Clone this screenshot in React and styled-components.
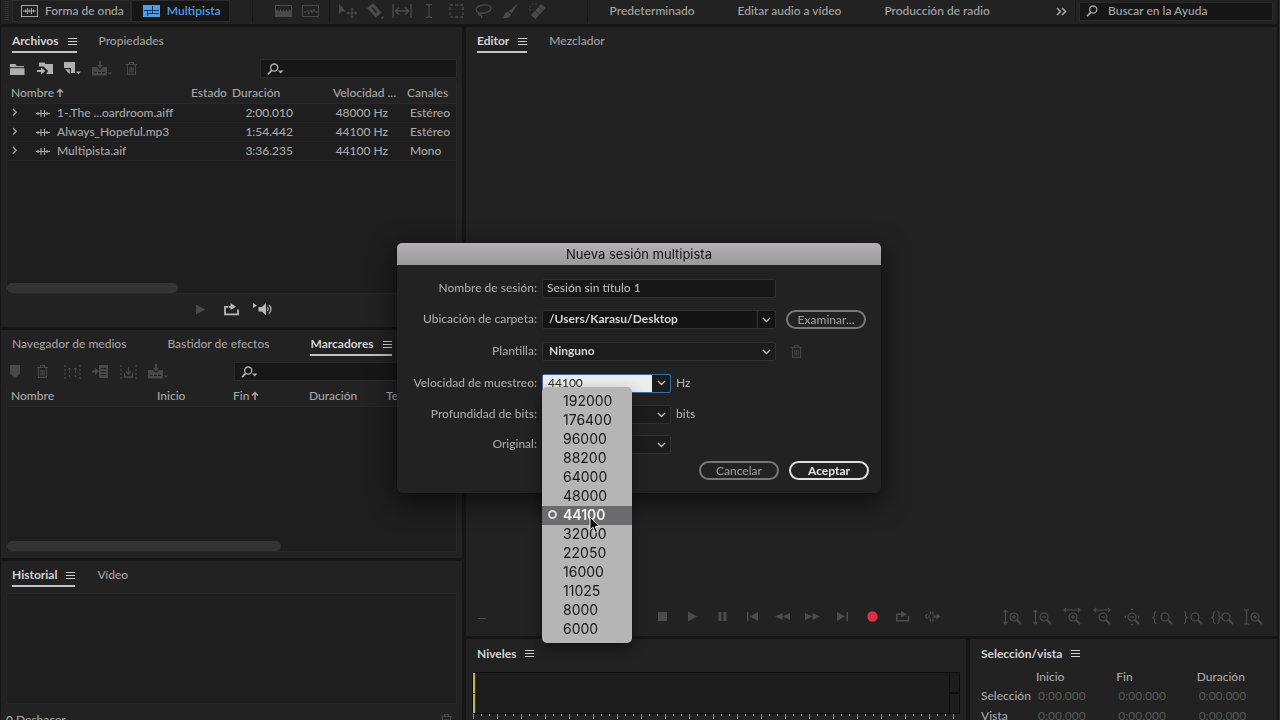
import styled, { createGlobalStyle, css } from "styled-components";

const GlobalStyle = createGlobalStyle`
  * {
    box-sizing: border-box;
  }

  body {
    margin: 0;
    background: #161616;
    color: #a6a6a6;
    font-family: "Lato", "Open Sans", sans-serif;
    font-size: 12px;
    font-weight: 500;
    line-height: 20px;
    overflow: hidden;
  }

  button, input, select {
    font: inherit;
    color: inherit;
    margin: 0;
    padding: 0;
    border: 0;
    background: none;
    outline: none;
  }

  svg {
    display: block;
    flex-shrink: 0;
  }
`;

const Shell = styled.div`
  height: 100vh;
  display: flex;
  flex-direction: column;
  gap: 3px;
  padding: 0 2px 0 1px;
  border-right: 1px solid #4a2a24;
`;

/* ---------- top bar ---------- */

const TopBar = styled.header`
  flex: 0 0 24px;
  display: flex;
  align-items: center;
  background: #222;
  padding: 0 4px 2px;
`;

const Grip = styled.div`
  width: 4px;
  height: 20px;
  margin-right: 3px;
  background: repeating-linear-gradient(#333 0 1px, #222 1px 2px);
`;

const ViewButton = styled.button`
  height: 22px;
  display: flex;
  align-items: center;
  gap: 7px;
  padding: 0 ${(p) => (p.$on ? "8px 0 11px" : "6px 0 8px")};
  border: 1px solid #2b2b2b;
  color: ${(p) => (p.$on ? "#4b9fea" : "#a6a6a6")};
  background: ${(p) => (p.$on ? "#161616" : "#202020")};
  font-weight: ${(p) => (p.$on ? 600 : 500)};
`;

const Tools = styled.div`
  display: flex;
  align-items: center;
  color: #4a4a4a;
  height: 22px;
  padding: ${(p) => p.$pad};
  margin-left: ${(p) => p.$left || 0}px;
  border-left: 1px solid #191919;
`;

const ToolButton = styled.button`
  width: 27px;
  height: 20px;
  display: flex;
  align-items: center;
  justify-content: center;
`;

const Workspaces = styled.nav`
  flex: 1;
  display: flex;
  align-items: center;
  gap: 43px;
  height: 22px;
  padding: 0 8px 0 22px;
  border-left: 1px solid #191919;
  border-right: 1px solid #191919;
  white-space: nowrap;

  button:last-child {
    margin-left: auto;
  }
`;

const HelpSearch = styled.label`
  flex: 0 0 194px;
  height: 19px;
  display: flex;
  align-items: center;
  gap: 10px;
  padding: 0 6px;
  margin-left: 3px;
  border: 1px solid #292929;
  background: #161616;

  input {
    min-width: 0;
    flex: 1;
  }

  input::placeholder {
    color: #a6a6a6;
    opacity: 1;
  }
`;

/* ---------- panels ---------- */

const Workspace = styled.main`
  flex: 1;
  min-height: 0;
  display: grid;
  grid-template-columns: minmax(0, 461fr) minmax(0, 811fr);
  gap: 4px;
`;

const Column = styled.div`
  display: grid;
  grid-template-rows: ${(p) => p.$rows};
  gap: 3px;
  min-height: 0;
`;

const BottomRow = styled.div`
  display: grid;
  grid-template-columns: minmax(0, 500fr) minmax(0, 307fr);
  gap: 4px;
  min-height: 0;
`;

const Panel = styled.section`
  display: flex;
  flex-direction: column;
  min-width: 0;
  min-height: 0;
  overflow: hidden;
  background: #222;
`;

const TabBar = styled.div`
  flex: 0 0 26px;
  display: flex;
  gap: 22px;
  padding-left: 11px;
`;

const Tab = styled.button`
  display: flex;
  align-items: center;
  gap: 9px;
  padding: ${(p) => (p.$plain ? 5 : 4)}px ${(p) => (p.$on ? 0 : 19)}px 0 0;
  border-bottom: 2px solid ${(p) => (p.$on && !p.$plain ? "#c4c4c4" : "transparent")};
  color: ${(p) => (p.$on ? "#d2d2d2" : "#a0a0a0")};
  font-weight: ${(p) => (p.$on ? 700 : 500)};
  line-height: 18px;
  white-space: nowrap;
`;

const PanelTools = styled.div`
  flex: 0 0 30px;
  display: flex;
  align-items: center;
  padding: 6px 5px 5px 9px;
  color: #4a4a4a;
`;

const PanelTool = styled.button`
  width: ${(p) => p.$w || 28}px;
  height: 18px;
  display: flex;
  align-items: center;
  color: ${(p) => (p.$on ? "#b0b0b0" : "#484848")};
`;

const PanelSearch = styled.label`
  flex: 0 0 ${(p) => p.$size};
  height: 19px;
  display: flex;
  align-items: center;
  gap: 6px;
  margin-left: auto;
  padding: 0 6px;
  background: #171717;
  border: 1px solid #2a2a2a;
  color: #b0b0b0;

  input {
    flex: 1;
    min-width: 0;
  }
`;

const ListFrame = styled.div`
  flex: ${(p) => p.$flex || "1 1 0"};
  min-height: 0;
  display: flex;
  flex-direction: column;
  margin: ${(p) => p.$margin || "0 5px"};
  background: #1e1e1e;
  border: 1px solid #282828;
  border-top: ${(p) => (p.$boxed ? "1px solid #282828" : 0)};
`;

const DataTable = styled.table`
  width: 100%;
  table-layout: fixed;
  border-collapse: collapse;
  white-space: nowrap;

  th, td {
    padding: 0 0 0 4px;
    overflow: hidden;
    text-align: left;
    vertical-align: top;
    font-weight: 500;
  }

  th {
    height: 20px;
    line-height: 20px;
    background: #222;
    border-bottom: 1px solid #282828;
  }

  td {
    height: 19px;
    line-height: 17px;
    border-bottom: 1px solid #262626;
  }
`;

const Col = styled.col`
  width: ${(p) => (p.$w ? `${p.$w}px` : "auto")};
`;

const NumberCell = styled.td`
  && {
    text-align: right;
    padding-right: ${(p) => p.$right}px;
  }
`;

const ChannelCell = styled.td`
  && {
    padding-left: 7px;
  }
`;

const FileName = styled.span`
  display: flex;
  align-items: center;
  padding-left: 1px;

  svg:first-child {
    margin-right: 18px;
  }

  svg + svg {
    margin-right: 7px;
  }
`;

const HeadLabel = styled.span`
  display: flex;
  align-items: center;
  gap: 2px;
`;

const ScrollBar = styled.div`
  height: 10px;
  width: ${(p) => p.$size};
  margin-top: auto;
  border-radius: 5px;
  background: #333;
`;

const Preview = styled.div`
  flex: 0 0 33px;
  display: flex;
  align-items: center;
  justify-content: center;
  gap: 14px;
  padding: 0 0 3px 6px;

  button {
    height: 18px;
    display: flex;
    align-items: center;
    color: #b8b8b8;
  }

  button:first-child {
    margin-right: 4px;
    color: #4a4a4a;
  }
`;

const HistoryFooter = styled.footer`
  flex: 0 0 26px;
  display: flex;
  justify-content: space-between;
  padding: 6px 10px 0 5px;

  button {
    color: #484848;
  }
`;

/* ---------- editor ---------- */

const EditorArea = styled.div`
  flex: 1;
`;

const TransportBar = styled.div`
  flex: 0 0 39px;
  display: flex;
  align-items: center;
  gap: 50px;
  padding: 0 10px 0 12px;
  color: #4c4c4c;
`;

const TimeReadout = styled.div`
  flex: 1;
  padding-top: 4px;
`;

const ButtonGroup = styled.div`
  display: flex;
`;

const TransportButton = styled.button`
  width: 30px;
  height: 24px;
  display: flex;
  align-items: center;
  justify-content: center;
  color: ${(p) => (p.$rec ? "#dc2f46" : "#4c4c4c")};
`;

/* ---------- levels ---------- */

const Meter = styled.div`
  flex: 0 0 42px;
  display: flex;
  margin: 7px 6px 0;
  border: 1px solid #0d0d0d;
  background: #1c1c1c;
`;

const MeterLevel = styled.div`
  width: 3px;
  background: linear-gradient(#b7b94a 0 49%, #55561f 49% 52%, #b7b94a 52%);
  border-right: 1px solid #33331a;
`;

const MeterClip = styled.div`
  width: 10px;
  margin-left: auto;
  border-left: 1px solid #0d0d0d;
  background: linear-gradient(#1c1c1c 0 48%, #0d0d0d 48% 52%, #1c1c1c 52%);
`;

const Ticks = styled.svg`
  width: calc(100% - 16px);
  height: 6px;
  margin-left: 7px;
`;

const TimesTable = styled.table`
  width: 100%;
  margin-top: 2px;
  table-layout: fixed;
  border-collapse: collapse;
  color: #555;

  th, td {
    height: 18px;
    line-height: 18px;
    padding: 0 0 0 2px;
    text-align: left;
    font-weight: 500;
    white-space: nowrap;
  }

  th {
    color: #a6a6a6;
    padding: 0;
  }

  th[scope="row"] {
    padding-left: 11px;
  }

  tr:last-child > * {
    padding-top: 2px;
  }

  thead tr > * {
    padding: 0 0 2px;
    line-height: 16px;
  }
`;

/* ---------- dialog ---------- */

const Overlay = styled.div`
  position: fixed;
  inset: 0;
  display: flex;
  align-items: center;
  justify-content: center;
  padding: 16px 2px 0 0;
`;

const Dialog = styled.form`
  width: 484px;
  border-radius: 5px;
  background: #222;
  box-shadow: 0 8px 24px 4px rgba(0, 0, 0, 0.5), 0 0 1px #000;
`;

const DialogTitle = styled.h1`
  margin: 0;
  height: 22px;
  border-radius: 5px 5px 0 0;
  background: linear-gradient(#b4b1b4, #9b989b);
  color: #111;
  font: 400 13px/22px "Inter", sans-serif;
  text-align: center;
`;

const Fields = styled.div`
  display: grid;
  grid-template-columns: 140px 1fr;
  grid-template-rows: 30px 32px 32px 32px 30px 30px;
  column-gap: 5px;
  align-items: center;
  margin-top: 8px;
`;

const FieldLabel = styled.label`
  text-align: right;
  white-space: nowrap;
`;

const FieldLine = styled.div`
  position: relative;
  display: flex;
  align-items: center;
`;

const fieldBox = css`
  height: 19px;
  width: ${(p) => (p.$wide ? 234 : 129)}px;
  border: 1px solid #303030;
  border-radius: 2px;
  background: #171717;
`;

const TextField = styled.input`
  ${fieldBox}
  padding: 0 4px;
  color: #b8b8b8;
`;

const SelectBox = styled.div`
  ${fieldBox}
  position: relative;
  display: flex;
  background: ${(p) => (p.$dark ? "#141414" : "#1c1c1c")};

  select {
    flex: 1;
    appearance: none;
    height: 16px;
    line-height: 16px;
    padding-left: 6px;
    color: #d4d4d4;
    font-weight: 700;
  }

  svg {
    position: absolute;
    right: 4px;
    top: 6px;
    color: #bdbdbd;
    pointer-events: none;
  }
`;

const Divider = styled.span`
  width: 1px;
  margin-right: 17px;
  background: #303030;
`;

const ComboBox = styled.div`
  ${fieldBox}
  display: flex;
  border-color: #3c6ca8;
  background: #1c1c1c;

  input {
    flex: 1;
    min-width: 0;
    padding-left: 5px;
    background: #ececec;
    color: #333;
  }

  button {
    width: 18px;
    display: flex;
    align-items: center;
    justify-content: center;
    color: #bdbdbd;
  }
`;

const Unit = styled.span`
  margin-left: 5px;
`;

const PillButton = styled.button`
  height: 19px;
  width: 80px;
  line-height: 15px;
  border: 2px solid ${(p) => (p.$primary ? "#e0e0e0" : "#777")};
  border-radius: 10px;
  color: ${(p) => (p.$primary ? "#e6e6e6" : "#999")};
  font-weight: ${(p) => (p.$primary ? 700 : 500)};
`;

const BrowseButton = styled(PillButton)`
  margin-left: 10px;
`;

const TrashButton = styled.button`
  margin-left: 15px;
  color: #444;
`;

const DialogActions = styled.div`
  display: flex;
  justify-content: flex-end;
  gap: 10px;
  padding: 2px 12px 13px;
`;

const RateMenu = styled.ul`
  position: absolute;
  z-index: 2;
  top: 14px;
  left: 0;
  width: 90px;
  margin: 0;
  padding: 5px 0 4px;
  list-style: none;
  border-radius: 5px;
  background: #b5b5b5;
  box-shadow: 0 6px 14px rgba(0, 0, 0, 0.45);
`;

const RateOption = styled.li`
  display: flex;
  align-items: center;
  gap: 6px;
  height: 19px;
  padding: 0 0 2px ${(p) => (p["aria-selected"] ? 6 : 21)}px;
  background: ${(p) => (p["aria-selected"] ? "#6b6a6c" : "none")};
  color: ${(p) => (p["aria-selected"] ? "#f4f4f4" : "#161616")};
  font: ${(p) => (p["aria-selected"] ? 600 : 400)} 14px/17px "Inter", sans-serif;
`;

const RateDot = styled.span`
  width: 9px;
  height: 9px;
  border: 2px solid #d8d8d8;
  border-radius: 50%;
`;

const Pointer = styled.svg`
  position: absolute;
  z-index: 3;
  left: 47px;
  top: 143px;
`;

/* ---------- icons ---------- */

function Icon({ w = 16, h = 16, children, fill = "none", stroke = "currentColor", sw = 1 }) {
  return (
    <svg width={w} height={h} viewBox={`0 0 ${w} ${h}`} fill={fill} stroke={stroke} strokeWidth={sw} overflow="visible" aria-hidden="true">
      {children}
    </svg>
  );
}

const solid = { fill: "currentColor", stroke: "none" };

const MenuIcon = () => (
  <Icon w={9} h={9}>
    <path d="M0 1.5h9M0 4.5h9M0 7.5h9" />
  </Icon>
);

const SearchIcon = () => (
  <Icon w={12} h={12} sw={1.3}>
    <circle cx="7.2" cy="4.6" r="3.6" />
    <path d="M4.8 7.4L1 11.2" strokeWidth="1.7" />
  </Icon>
);

const SearchMenuIcon = () => (
  <Icon w={17} h={12} sw={1.3}>
    <circle cx="7.2" cy="4.6" r="3.6" />
    <path d="M4.8 7.4L1 11.2" strokeWidth="1.7" />
    <path d="M11 7.5h5.4l-2.7 3z" {...solid} />
  </Icon>
);

const ChevronDown = () => (
  <Icon w={9} h={6} sw={1.4}>
    <path d="M1 1l3.5 3.5L8 1" />
  </Icon>
);

const ChevronRight = () => (
  <Icon w={6} h={10} sw={1.3}>
    <path d="M1 1l3.2 3.2L1 7.6" />
  </Icon>
);

const SortUp = () => (
  <Icon w={8} h={10} sw={1.5}>
    <path d="M4 9V1.5M1 4.5l3-3 3 3" />
  </Icon>
);

const WaveIcon = () => (
  <Icon w={14} h={10} sw={1.2}>
    <path d="M0 5.500h14M2 4v3M5 2v7M8.500 2v7M11 4v3" />
  </Icon>
);

const WaveViewIcon = () => (
  <Icon w={17} h={12}>
    <rect x="0.5" y="0.5" width="16" height="11" />
    <path d="M2 6h13M4.5 4.5v3M6.5 3v6M8.5 4.5v3M10.5 3v6M12.5 4.5v3" />
  </Icon>
);

const MultiViewIcon = () => (
  <Icon w={17} h={12}>
    <rect x="0" y="0" width="17" height="12" {...solid} />
    <path d="M1 5.500h15M9.500 1v7M5 8.500h11M4.500 6v5" stroke="#183450" />
  </Icon>
);

const SpectrumIcon = () => (
  <Icon w={17} h={12}>
    <rect x="0.5" y="0.5" width="16" height="11" />
    <path d="M1 11V6l1.5-2 1.5 3 1.500-3 1.500 3 1.500-3 1.500 3 1.500-3 1.500 3 1.500-3L16 6v5z" {...solid} />
  </Icon>
);

const PitchIcon = () => (
  <Icon w={17} h={12}>
    <rect x="0.5" y="0.5" width="16" height="11" />
    <path d="M2 7h2l1.500-2 1.500 4 2-4 1 3 2-4 1 3h2.500" />
  </Icon>
);

const MoveIcon = () => (
  <Icon w={18} h={14}>
    <path d="M0 0v10l2.500-2.500H7z" {...solid} />
    <path d="M13 5v8M9 9h8" />
    <path d="M13 3.500l2 2h-4zM13 14.500l2-2h-4zM7.600 9l2-2v4zM18.400 9l-2-2v4z" {...solid} />
  </Icon>
);

const RazorIcon = () => (
  <Icon w={18} h={16}>
    <path d="M1 5l6-5 8.500 9.500-5.500 5z" {...solid} />
    <path d="M6 4.500l4.500 5.200" stroke="#222" strokeWidth="1.800" />
    <path d="M14.500 15.500h3v-3z" {...solid} />
  </Icon>
);

const SlipIcon = () => (
  <Icon w={20} h={14} sw={1.4}>
    <path d="M1 0v14M19 0v14M4 7h12M7 3.500L3.500 7 7 10.500M13 3.500L16.500 7 13 10.500" />
  </Icon>
);

const IBeamIcon = () => (
  <Icon w={8} h={14} sw={1.2}>
    <path d="M1 .6h2l1 1 1-1h2M4 1.500v11M1 13.400h2l1-1 1 1h2" />
  </Icon>
);

const MarqueeIcon = () => (
  <Icon w={15} h={14} sw={1.3}>
    <rect x="1" y="1" width="13" height="12" strokeDasharray="3 2" />
  </Icon>
);

const LassoIcon = () => (
  <Icon w={17} h={15} sw={1.3}>
    <path d="M4 9C0 7 0 4 4 2s12-1.500 12 2-6 6-11 5c-2-.4-2 2.500 0 2s2 2 1 3" />
  </Icon>
);

const BrushIcon = () => (
  <Icon w={17} h={16}>
    <path d="M16.500 0L7 8l2.500 2.500zM6 8.500l3 3C8 15 4 15.500 0 15c2.500-1 2-6 6-6.500z" {...solid} />
  </Icon>
);

const HealIcon = () => (
  <Icon w={17} h={16}>
    <path d="M2 12l10-11 4.500 4L6.500 16z" {...solid} />
    <path d="M6 7.500l5 4.500M9.500 4l5 4.500M8 9.500l2 2" stroke="#222" strokeDasharray="1.500 1" />
    <path d="M1 8V3.500L3.500 1H8" strokeDasharray="2 1.500" />
  </Icon>
);

const FolderIcon = () => (
  <Icon w={15} h={12} {...solid}>
    <path d="M0 1h5.500l1 2H14v1.200H0zM0 5.200h14.500V12H0z" />
  </Icon>
);

const ImportIcon = () => (
  <Icon w={17} h={13} {...solid}>
    <path d="M2 .5h5.500l1 1.500H16v10H9.500l1.500-3.200L6.500 4.500H2z" />
    <path d="M0 8h4V5.500L8.500 9 4 12.500V10H0z" />
  </Icon>
);

const NewFileIcon = () => (
  <Icon w={17} h={13} {...solid}>
    <path d="M0 0h11v11H7V6H0z" />
    <path d="M1 7.200h4.800V12z" />
    <path d="M12 9.500h5l-2.500 2.800z" />
  </Icon>
);

const InsertIcon = () => (
  <Icon w={20} h={15} {...solid}>
    <path d="M0 6h5l3 3 3-3h4v8.500H0z" />
    <path d="M7 0h2v4h2L8 7.500 5 4h2z" />
    <path d="M2 11.500h3M6 11.500h3M10 11.500h3" stroke="#222" />
    <path d="M16 11.500h4l-2 2.500z" />
  </Icon>
);

const TrashIcon = () => (
  <Icon w={11} h={13} sw={1.1}>
    <path d="M0 2.500h11M3.500 2.500V.6h4v1.900M1.500 3v9.400h8V3M3.800 5v5.500M5.500 5v5.500M7.200 5v5.500" />
  </Icon>
);

const MarkerIcon = () => (
  <Icon w={10} h={13} {...solid}>
    <path d="M0 0h10v8.500L5 13 0 8.500z" />
  </Icon>
);

const MergeIcon = () => (
  <Icon w={17} h={14} sw={1.3}>
    <path d="M1 0v14M16 0v14M5.500 6v8M11.500 6v8" strokeDasharray="2 2" />
    <path d="M4 3l1.500 3L7 3zM10 3l1.500 3L13 3z" {...solid} />
  </Icon>
);

const PlaylistIcon = () => (
  <Icon w={16} h={13} {...solid}>
    <path d="M7 0h9v13H7z" />
    <path d="M0 5.500h3V3l4 3.500L3 10V7.500H0z" />
    <path d="M9 3.500h5M9 6.500h5M9 9.500h5" stroke="#222" />
  </Icon>
);

const ExportMarkerIcon = () => (
  <Icon w={17} h={14} sw={1.3}>
    <path d="M1 0v14M16 0v14" strokeDasharray="2 2" />
    <path d="M4.500 8v4h8V8M8.500 2v7M6 6.500L8.500 9 11 6.500" />
  </Icon>
);

const LoopIcon = () => (
  <Icon w={15} h={13} sw={1.8}>
    <path d="M4.500 3.900H1v7.500h13V6.500" />
    <path d="M5 3.900h4" />
    <path d="M6.500 0l5.500 3.700L6.500 7z" {...solid} />
  </Icon>
);

const AutoPlayIcon = () => (
  <Icon w={21} h={14} sw={1.2}>
    <path d="M0 1l4 2.500L0 6zM5.500 5H9l4-4v12.500L9 9.500H5.500z" {...solid} />
    <path d="M14.500 5q1.500 2 0 4M16 3q4 4 0 8.500" />
  </Icon>
);

const PlayIcon = () => (
  <Icon w={10} h={11} {...solid}>
    <path d="M0 .5l9.500 5-9.500 5z" />
  </Icon>
);

const transport = [
  ["Detener", <path d="M3 3h9v9H3z" />],
  ["Reproducir", <path d="M3 2.500l9 5-9 5z" />],
  ["Pausa", <path d="M3.500 3h3v9h-3zM8.500 3h3v9h-3z" />],
  ["Ir al inicio", <path d="M2 3h1.500v9H2zM13 3v9L5 7.500z" />],
  ["Rebobinar", <path d="M7.500 4v7L0 7.500zM15 4v7L7.500 7.500z" />],
  ["Avance rápido", <path d="M0 4v7l7.500-3.500zM7.500 4v7L15 7.500z" />],
  ["Ir al final", <path d="M2 3v9l8-4.500zM11.500 3H13v9h-1.500z" />],
  ["Grabar", <circle cx="7.500" cy="7.500" r="5.200" />],
  ["Bucle", <path d="M1 4.500h5V2l6 3.200L6 8.500V6H2.500v5h10.300V7h1.500v5.500H1z" />],
  ["Omitir", <path d="M5.500 2.500v2L4 7.500l1.500 3v2M8 2.500v2l1.500 3-1.500 3v2M2.500 5L0 7.500 2.500 10" stroke="currentColor" strokeWidth="1.300" strokeDasharray="3 1" fill="none" />],
];

// a magnifier is part of every zoom icon
const lens = (sign, x = 10) => (
  <g transform={`translate(${x} 8)`}>
    <circle r="4" />
    <path d="M3 3l4 4" strokeWidth="1.800" />
    {sign && <path d="M-2 0h4" />}
    {sign === "+" && <path d="M0-2v4" />}
  </g>
);

const vertical = <path d="M2.500 1v14M.5 3l2-2 2 2M.5 13l2 2 2-2" />;
const horizontal = <path d="M1 1h16M3-1L1 1l2 2M15-1l2 2-2 2" />;

const zooms = [
  ["Acercar amplitud", <>{vertical}{lens("+", 11)}</>],
  ["Alejar amplitud", <>{vertical}{lens("-", 11)}</>],
  ["Acercar tiempo", <>{horizontal}{lens("+")}</>],
  ["Alejar tiempo", <>{horizontal}{lens("-")}</>],
  ["Zoom completo", <>{lens("-", 9)}<path d="M9-1l1.500 2h-3zM9 17l1.500-2h-3zM1 8l2-1.500v3zM17 8l-2-1.500v3z" fill="currentColor" stroke="none" /></>],
  ["Acercar punto inicial", <><path d="M3 2L1.500 4v3L0 8.500 1.500 10v3L3 15" />{lens(null, 12)}</>],
  ["Acercar punto final", <><path d="M1 2l1.500 2v3L4 8.500 2.500 10v3L1 15" />{lens(null, 12)}</>],
  ["Zoom de selección", <><path d="M2 2L.5 4v3L-1 8.500.5 10v3L2 15M4.500 2L6 4v3l1.500 1.500L6 10v3l-1.500 2" />{lens(null, 13)}</>],
  ["Restablecer zoom", <><path d="M3.500 1v14M1 1h5M1 15h5" />{lens("+", 12)}</>],
];

/* ---------- data ---------- */

const files = [
  { name: "1-.The ...oardroom.aiff", duration: "2:00.010", rate: "48000 Hz", channels: "Estéreo" },
  { name: "Always_Hopeful.mp3", duration: "1:54.442", rate: "44100 Hz", channels: "Estéreo" },
  { name: "Multipista.aif", duration: "3:36.235", rate: "44100 Hz", channels: "Mono" },
];

const rates = [192000, 176400, 96000, 88200, 64000, 48000, 44100, 32000, 22050, 16000, 11025, 8000, 6000];

const tools = [
  ["Mover", MoveIcon],
  ["Cuchilla", RazorIcon],
  ["Deslizar", SlipIcon],
  ["Selección de tiempo", IBeamIcon],
  ["Marco", MarqueeIcon],
  ["Lazo", LassoIcon],
  ["Pincel", BrushIcon],
  ["Pincel corrector", HealIcon],
];

/* ---------- parts ---------- */

function Tabs({ names, active, plain }) {
  return (
    <TabBar role="tablist">
      {names.map((name) => (
        <Tab key={name} type="button" role="tab" aria-selected={name === active} $on={name === active} $plain={plain}>
          {name}
          {name === active && <MenuIcon />}
        </Tab>
      ))}
    </TabBar>
  );
}

function Header() {
  return (
    <TopBar>
      <Grip />
      <ViewButton type="button">
        <WaveViewIcon />
        Forma de onda
      </ViewButton>
      <ViewButton type="button" $on>
        <MultiViewIcon />
        Multipista
      </ViewButton>
      <Tools $left={22} $pad="0 5px 0 17px">
        <ToolButton type="button" aria-label="Frecuencia espectral"><SpectrumIcon /></ToolButton>
        <ToolButton type="button" aria-label="Tono espectral"><PitchIcon /></ToolButton>
      </Tools>
      <Tools $pad="0 36px 0 5px">
        {tools.map(([name, Glyph]) => (
          <ToolButton key={name} type="button" aria-label={name}><Glyph /></ToolButton>
        ))}
      </Tools>
      <Workspaces>
        <button type="button">Predeterminado</button>
        <button type="button">Editar audio a vídeo</button>
        <button type="button">Producción de radio</button>
        <button type="button" aria-label="Más espacios">
          <Icon w={11} h={9} sw={1.6}>
            <path d="M1 1l3.500 3.500L1 8M6 1l3.500 3.500L6 8" />
          </Icon>
        </button>
      </Workspaces>
      <HelpSearch>
        <SearchIcon />
        <input aria-label="Buscar en la Ayuda" placeholder="Buscar en la Ayuda" />
      </HelpSearch>
    </TopBar>
  );
}

function FilesPanel() {
  return (
    <Panel>
      <Tabs names={["Archivos", "Propiedades"]} active="Archivos" />
      <PanelTools>
        <PanelTool type="button" $on $w={27} aria-label="Abrir"><FolderIcon /></PanelTool>
        <PanelTool type="button" $on $w={27} aria-label="Importar"><ImportIcon /></PanelTool>
        <PanelTool type="button" $on aria-label="Nuevo"><NewFileIcon /></PanelTool>
        <PanelTool type="button" $w={34} aria-label="Insertar en multipista"><InsertIcon /></PanelTool>
        <PanelTool type="button" aria-label="Eliminar"><TrashIcon /></PanelTool>
        <PanelSearch $size="197px">
          <SearchMenuIcon />
          <input aria-label="Buscar archivos" />
        </PanelSearch>
      </PanelTools>
      <ListFrame>
        <DataTable>
          <colgroup>
            <Col />
            <Col $w={41} />
            <Col $w={101} />
            <Col $w={74} />
            <Col $w={53} />
          </colgroup>
          <thead>
            <tr>
              <th><HeadLabel>Nombre <SortUp /></HeadLabel></th>
              <th>Estado</th>
              <th>Duración</th>
              <th>Velocidad ...</th>
              <th>Canales</th>
            </tr>
          </thead>
          <tbody>
            {files.map((file) => (
              <tr key={file.name}>
                <td>
                  <FileName>
                    <ChevronRight />
                    <WaveIcon />
                    {file.name}
                  </FileName>
                </td>
                <td />
                <NumberCell $right={36}>{file.duration}</NumberCell>
                <NumberCell $right={15}>{file.rate}</NumberCell>
                <ChannelCell>{file.channels}</ChannelCell>
              </tr>
            ))}
          </tbody>
        </DataTable>
        <ScrollBar $size="38%" />
      </ListFrame>
      <Preview>
        <button type="button" aria-label="Reproducir"><PlayIcon /></button>
        <button type="button" aria-label="Reproducir en bucle"><LoopIcon /></button>
        <button type="button" aria-label="Reproducción automática"><AutoPlayIcon /></button>
      </Preview>
    </Panel>
  );
}

function MarkersPanel() {
  return (
    <Panel>
      <Tabs names={["Navegador de medios", "Bastidor de efectos", "Marcadores"]} active="Marcadores" />
      <PanelTools>
        <PanelTool type="button" $w={27} aria-label="Añadir marcador"><MarkerIcon /></PanelTool>
        <PanelTool type="button" $w={27} aria-label="Eliminar marcador"><TrashIcon /></PanelTool>
        <PanelTool type="button" aria-label="Combinar"><MergeIcon /></PanelTool>
        <PanelTool type="button" aria-label="Lista de reproducción"><PlaylistIcon /></PanelTool>
        <PanelTool type="button" aria-label="Exportar audio"><ExportMarkerIcon /></PanelTool>
        <PanelTool type="button" aria-label="Insertar en multipista"><InsertIcon /></PanelTool>
        <PanelSearch $size="223px">
          <SearchMenuIcon />
          <input aria-label="Buscar marcadores" />
        </PanelSearch>
      </PanelTools>
      <ListFrame $margin="0 5px 6px">
        <DataTable>
          <colgroup>
            <Col />
            <Col $w={76} />
            <Col $w={76} />
            <Col $w={77} />
            <Col $w={74} />
          </colgroup>
          <thead>
            <tr>
              <th>Nombre</th>
              <th>Inicio</th>
              <th><HeadLabel>Fin <SortUp /></HeadLabel></th>
              <th>Duración</th>
              <th>Tempo</th>
            </tr>
          </thead>
        </DataTable>
        <ScrollBar $size="61%" />
      </ListFrame>
    </Panel>
  );
}

function EditorPanel() {
  return (
    <Panel>
      <Tabs names={["Editor", "Mezclador"]} active="Editor" />
      <EditorArea />
      <TransportBar>
        <TimeReadout>
          <Icon w={8} h={1}><path d="M0 .5h8" /></Icon>
        </TimeReadout>
        <ButtonGroup>
          {transport.map(([name, shape]) => (
            <TransportButton key={name} type="button" aria-label={name} $rec={name === "Grabar"}>
              <Icon w={15} h={15} {...solid}>
                {shape}
                {name === "Omitir" && <path d="M9.500 6.800h2V4.500l4 3-4 3V8.200h-2z" />}
              </Icon>
            </TransportButton>
          ))}
        </ButtonGroup>
        <ButtonGroup>
          {zooms.map(([name, shape]) => (
            <TransportButton key={name} type="button" aria-label={name}>
              <Icon w={18} h={16} sw={1.2}>{shape}</Icon>
            </TransportButton>
          ))}
        </ButtonGroup>
      </TransportBar>
    </Panel>
  );
}

function LevelsPanel() {
  return (
    <Panel>
      <Tabs names={["Niveles"]} active="Niveles" plain />
      <Meter>
        <MeterLevel />
        <MeterClip />
      </Meter>
      <Ticks>
        <defs>
          <pattern id="ticks" width="24" height="6" patternUnits="userSpaceOnUse">
            <path d="M.5 0v5" stroke="#8a8a8a" />
            <path d="M8.500 0v2M16.500 0v2" stroke="#8a8a8a" />
          </pattern>
        </defs>
        <rect width="100%" height="6" fill="url(#ticks)" />
      </Ticks>
    </Panel>
  );
}

function SelectionPanel() {
  return (
    <Panel>
      <Tabs names={["Selección/vista"]} active="Selección/vista" plain />
      <TimesTable>
        <colgroup>
          <Col $w={66} />
          <Col />
          <Col />
          <Col />
        </colgroup>
        <thead>
          <tr>
            <td />
            <th>Inicio</th>
            <th>Fin</th>
            <th>Duración</th>
          </tr>
        </thead>
        <tbody>
          {["Selección", "Vista"].map((row) => (
            <tr key={row}>
              <th scope="row">{row}</th>
              <td>0:00.000</td>
              <td>0:00.000</td>
              <td>0:00.000</td>
            </tr>
          ))}
        </tbody>
      </TimesTable>
    </Panel>
  );
}

function SessionDialog() {
  return (
    <Overlay>
      <Dialog role="dialog" aria-labelledby="session-title">
        <DialogTitle id="session-title">Nueva sesión multipista</DialogTitle>
        <Fields>
          <FieldLabel htmlFor="name">Nombre de sesión:</FieldLabel>
          <FieldLine>
            <TextField id="name" $wide defaultValue="Sesión sin título 1" />
          </FieldLine>

          <FieldLabel htmlFor="folder">Ubicación de carpeta:</FieldLabel>
          <FieldLine>
            <SelectBox $wide $dark>
              <select id="folder">
                <option>/Users/Karasu/Desktop</option>
              </select>
              <Divider />
              <ChevronDown />
            </SelectBox>
            <BrowseButton type="button">Examinar...</BrowseButton>
          </FieldLine>

          <FieldLabel htmlFor="template">Plantilla:</FieldLabel>
          <FieldLine>
            <SelectBox $wide>
              <select id="template">
                <option>Ninguno</option>
              </select>
              <ChevronDown />
            </SelectBox>
            <TrashButton type="button" aria-label="Eliminar plantilla"><TrashIcon /></TrashButton>
          </FieldLine>

          <FieldLabel htmlFor="rate">Velocidad de muestreo:</FieldLabel>
          <FieldLine>
            <ComboBox>
              <input id="rate" defaultValue="44100" />
              <button type="button" aria-label="Mostrar velocidades"><ChevronDown /></button>
            </ComboBox>
            <Unit>Hz</Unit>
            <RateMenu role="listbox" aria-label="Velocidad de muestreo">
              {rates.map((rate) => (
                <RateOption key={rate} role="option" aria-selected={rate === 44100}>
                  {rate === 44100 && <RateDot />}
                  {rate}
                </RateOption>
              ))}
            </RateMenu>
            <Pointer width="12" height="18" viewBox="0 0 12 18" aria-hidden="true">
              <path d="M1 1v13l3-2.800L6.200 16.500l2.300-1L6.300 10.500H10.500z" fill="#111" stroke="#e8e8e8" />
            </Pointer>
          </FieldLine>

          <FieldLabel htmlFor="depth">Profundidad de bits:</FieldLabel>
          <FieldLine>
            <SelectBox>
              <select id="depth" />
              <ChevronDown />
            </SelectBox>
            <Unit>bits</Unit>
          </FieldLine>

          <FieldLabel htmlFor="master">Original:</FieldLabel>
          <FieldLine>
            <SelectBox>
              <select id="master" />
              <ChevronDown />
            </SelectBox>
          </FieldLine>
        </Fields>
        <DialogActions>
          <PillButton type="button">Cancelar</PillButton>
          <PillButton type="button" $primary>Aceptar</PillButton>
        </DialogActions>
      </Dialog>
    </Overlay>
  );
}

export default function App() {
  return (
    <>
      <GlobalStyle />
      <Shell>
        <Header />
        <Workspace>
          <Column $rows="minmax(0, 300fr) minmax(0, 228fr) minmax(0, 159fr)">
            <FilesPanel />
            <MarkersPanel />
            <Panel>
              <Tabs names={["Historial", "Vídeo"]} active="Historial" />
              <ListFrame $boxed $flex="1 0 111px" $margin="6px 5px 0" />
              <HistoryFooter>
                0 Deshacer
                <button type="button" aria-label="Vaciar historial"><TrashIcon /></button>
              </HistoryFooter>
            </Panel>
          </Column>
          <Column $rows="minmax(0, 609fr) minmax(0, 81fr)">
            <EditorPanel />
            <BottomRow>
              <LevelsPanel />
              <SelectionPanel />
            </BottomRow>
          </Column>
        </Workspace>
      </Shell>
      <SessionDialog />
    </>
  );
}
